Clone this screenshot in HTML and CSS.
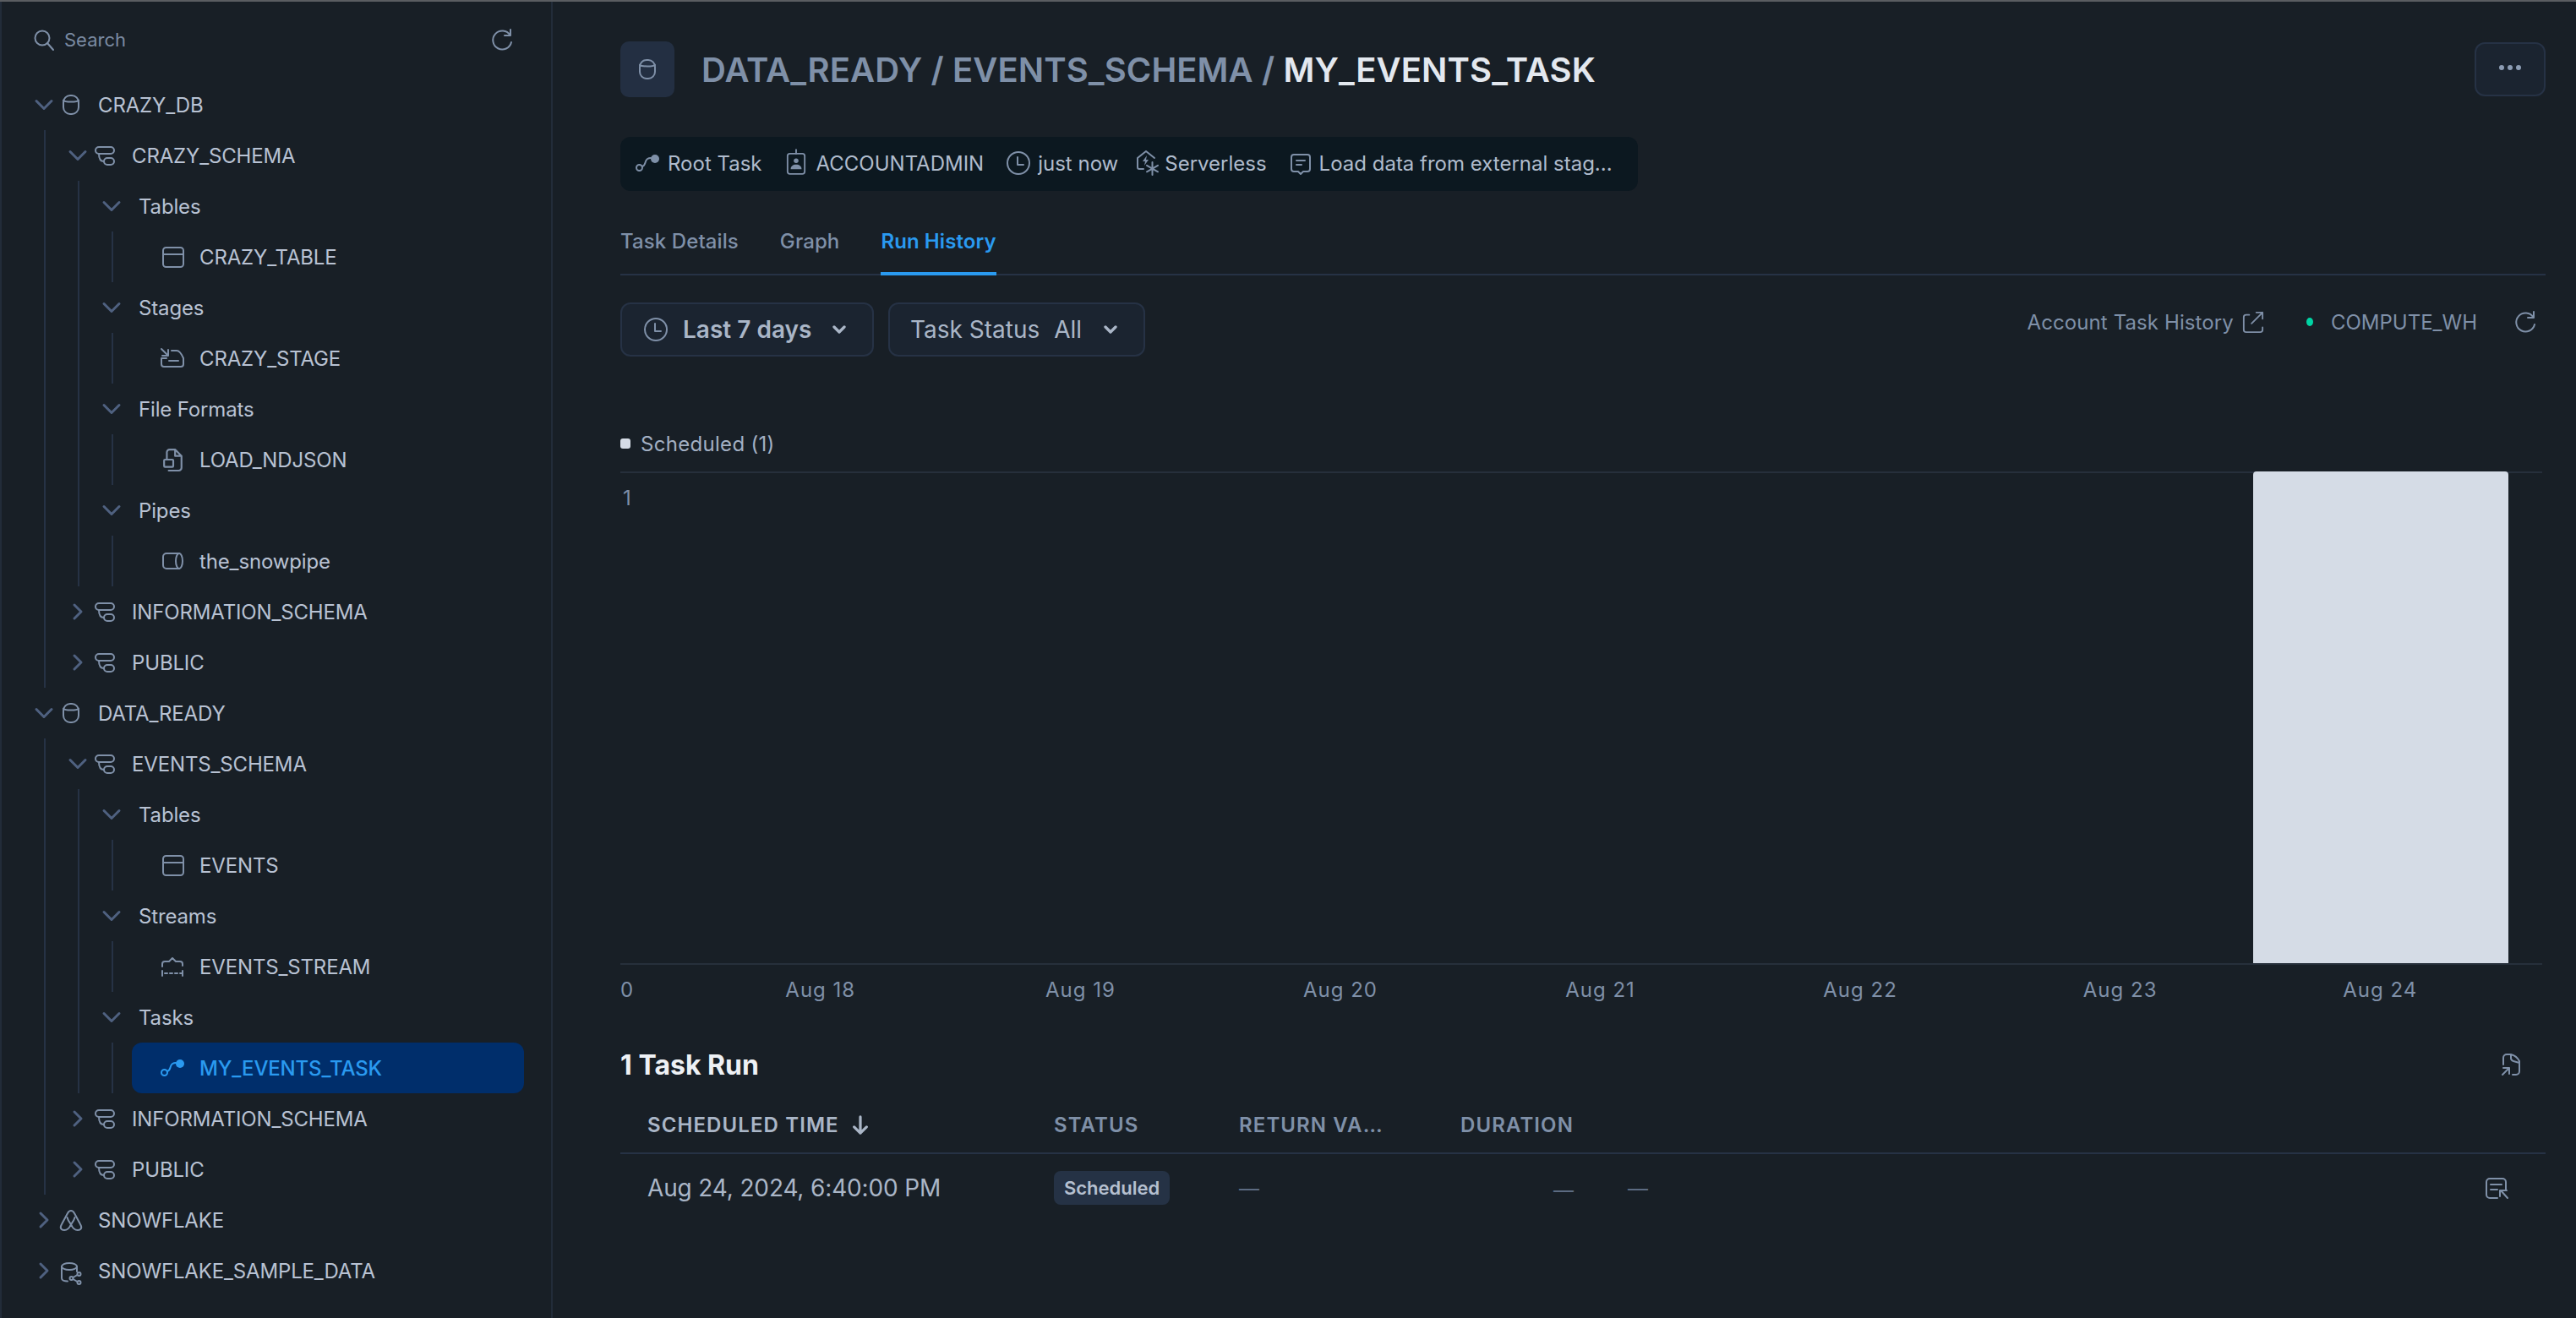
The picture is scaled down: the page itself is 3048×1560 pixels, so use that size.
FILE: index.html
```html
<!DOCTYPE html>
<html lang="en">
<head>
<meta charset="utf-8">
<title>MY_EVENTS_TASK</title>
<link rel="stylesheet" href="styles.css">
</head>
<body>
<svg class="sprite" xmlns="http://www.w3.org/2000/svg">
  <symbol id="i-down" viewBox="0 0 24 24"><path d="M3 7.500l9 9 9-9"/></symbol>
  <symbol id="i-right" viewBox="0 0 24 24"><path d="M8 4l8 8-8 8"/></symbol>
  <symbol id="i-db" viewBox="0 0 24 24"><rect x="3" y="1" width="18" height="22" rx="8"/><path d="M3 7c2 2 16 2 18 0"/></symbol>
  <symbol id="i-schema" viewBox="0 0 24 24"><rect x="1" y="2" width="22" height="8" rx="4"/><rect x="11" y="15" width="12" height="8" rx="4"/><path d="M5 10c0 6 2 9 6 9"/></symbol>
  <symbol id="i-table" viewBox="0 0 26 26"><rect x="1" y="2" width="24" height="23" rx="3.5"/><path d="M1 10h24"/></symbol>
  <symbol id="i-stage" viewBox="2 0 26 26"><path d="M1 2l8 8M9 3v7H2"/><path d="M13 4h6c3 0 5 2 8 9v7a3 3 0 0 1-3 3H4a3 3 0 0 1-3-3v-7h6M10 16h11"/></symbol>
  <symbol id="i-file" viewBox="0 0 24 24"><path d="M5 12V4a3 3 0 0 1 3-3h6l7 7v13a3 3 0 0 1-3 3H7M14 1v7h7"/><rect x="2" y="12" width="10" height="8" rx="1"/></symbol>
  <symbol id="i-pipe" viewBox="0 0 26 24"><path d="M20 3H5a4 4 0 0 0-4 4v10a4 4 0 0 0 4 4h15"/><ellipse cx="20" cy="12" rx="4" ry="9"/></symbol>
  <symbol id="i-stream" viewBox="2 0 26 26"><path d="M2 10c0-2 1-3 3-3h5l4-4 4 4h5c2 0 3 1 3 3v2M2 10v3M2 18v6M26 18v6M5 21h3M11 21h3M17 21h3M23 21h3"/></symbol>
  <symbol id="i-task" viewBox="0 0 28 20"><circle cx="4.500" cy="15.500" r="3.500"/><circle class="solid" cx="23" cy="5" r="5"/><path d="M8 14c3-1 3-3 4-6s3-4 6-4"/></symbol>
  <symbol id="i-share" viewBox="0 0 24 26"><ellipse cx="10" cy="5" rx="9" ry="4"/><path d="M1 5v14c0 2 3 3.500 7 3.500M19 5v6"/><circle cx="21.500" cy="14" r="2"/><circle cx="12.500" cy="19" r="2"/><circle cx="21.500" cy="24" r="2"/><path d="M14.500 18l5-3M14.500 20l5 3"/></symbol>
  <symbol id="i-snow" viewBox="0 0 26 25"><path d="M13 1c-2 0-3 1-4 3L2 17c-3 5 0 7 3 7 3 0 6-2 8-7 2 5 5 7 8 7 3 0 6-2 3-7L17 4c-1-2-2-3-4-3z"/><path d="M8.500 9c1 4 3 6 4.500 8 1.500-2 3.500-4 4.500-8"/></symbol>
  <symbol id="i-search" viewBox="0 0 24 24"><circle cx="10" cy="10" r="8.500"/><path d="M16 16l7 8"/></symbol>
  <symbol id="i-refresh" viewBox="0 0 24 24"><path d="M21.500 6.500A11 11 0 1 0 23 15M22 0v7h-7"/></symbol>
  <symbol id="i-badge" viewBox="0 0 26 32"><rect x="2" y="5" width="22" height="26" rx="3"/><path d="M13 0v5"/><circle class="solid" cx="13" cy="14" r="3"/><path class="solid" d="M6 25c0-4 3-6 7-6s7 2 7 6z"/></symbol>
  <symbol id="i-clock" viewBox="0 0 28 28"><circle cx="14" cy="14" r="13"/><path d="M13 7v9h7"/></symbol>
  <symbol id="i-serverless" viewBox="0 0 27 30"><path d="M8 22H3a2 2 0 0 1-2-2V9l10-8 10 8"/><path class="solid" d="M12 6l-5 7h3l-1 5 5-7h-3z"/><path d="M18.500 14v15M12 17.800l13 7.500M25 17.800l-13 7.500"/></symbol>
  <symbol id="i-comment" viewBox="0 0 24 25"><path d="M4 1h16a3 3 0 0 1 3 3v14a3 3 0 0 1-3 3h-5l-3 3-3-3H4a3 3 0 0 1-3-3V4a3 3 0 0 1 3-3zM7 8h10M7 13h6"/></symbol>
  <symbol id="i-external" viewBox="0 0 28 28"><path d="M9 5H5a3 3 0 0 0-3 3v16a3 3 0 0 0 3 3h18a3 3 0 0 0 3-3v-3M12 16L26 2M18 2h8v8"/></symbol>
  <symbol id="i-export" viewBox="0 0 22 26"><path d="M2 13V5a4 4 0 0 1 4-4h5c4 1 8 4 10 8v12a4 4 0 0 1-4 4h-4M11 1v4a4 4 0 0 0 3 4l7 2M1 25l8-8M2 17h7v7"/></symbol>
  <symbol id="i-open" viewBox="0 0 27 25"><path d="M14 24H5a4 4 0 0 1-4-4V5a4 4 0 0 1 4-4h15a4 4 0 0 1 4 4v10M6 8h13M6 14h8M18 15l8 9M17 22v-7h8"/></symbol>
  <symbol id="i-sort" viewBox="0 0 24 24"><path d="M12 1v21M4 14l8 8 8-8"/></symbol>
</svg>

<div class="topbar"></div>
<div class="app">
  <aside class="sidebar">
    <div class="search">
      <svg class="ico s24"><use href="#i-search"/></svg>
      <span class="search-text">Search</span>
      <svg class="ico s24 push"><use href="#i-refresh"/></svg>
    </div>
    <div class="tree">
      <div class="row l0"><svg class="chev"><use href="#i-down"/></svg><svg class="ico s24"><use href="#i-db"/></svg><span>CRAZY_DB</span></div>
      <div class="kids k0">
        <div class="row l1"><svg class="chev"><use href="#i-down"/></svg><svg class="ico s24"><use href="#i-schema"/></svg><span>CRAZY_SCHEMA</span></div>
        <div class="kids k1">
          <div class="row l2"><svg class="chev"><use href="#i-down"/></svg><span>Tables</span></div>
          <div class="kids k2"><div class="row l3"><svg class="ico s26"><use href="#i-table"/></svg><span>CRAZY_TABLE</span></div></div>
          <div class="row l2"><svg class="chev"><use href="#i-down"/></svg><span>Stages</span></div>
          <div class="kids k2"><div class="row l3"><svg class="ico s26"><use href="#i-stage"/></svg><span>CRAZY_STAGE</span></div></div>
          <div class="row l2"><svg class="chev"><use href="#i-down"/></svg><span>File Formats</span></div>
          <div class="kids k2"><div class="row l3"><svg class="ico s26"><use href="#i-file"/></svg><span>LOAD_NDJSON</span></div></div>
          <div class="row l2"><svg class="chev"><use href="#i-down"/></svg><span>Pipes</span></div>
          <div class="kids k2"><div class="row l3"><svg class="ico s26"><use href="#i-pipe"/></svg><span>the_snowpipe</span></div></div>
        </div>
        <div class="row l1"><svg class="chev"><use href="#i-right"/></svg><svg class="ico s24"><use href="#i-schema"/></svg><span>INFORMATION_SCHEMA</span></div>
        <div class="row l1"><svg class="chev"><use href="#i-right"/></svg><svg class="ico s24"><use href="#i-schema"/></svg><span>PUBLIC</span></div>
      </div>
      <div class="row l0"><svg class="chev"><use href="#i-down"/></svg><svg class="ico s24"><use href="#i-db"/></svg><span>DATA_READY</span></div>
      <div class="kids k0">
        <div class="row l1"><svg class="chev"><use href="#i-down"/></svg><svg class="ico s24"><use href="#i-schema"/></svg><span>EVENTS_SCHEMA</span></div>
        <div class="kids k1">
          <div class="row l2"><svg class="chev"><use href="#i-down"/></svg><span>Tables</span></div>
          <div class="kids k2"><div class="row l3"><svg class="ico s26"><use href="#i-table"/></svg><span>EVENTS</span></div></div>
          <div class="row l2"><svg class="chev"><use href="#i-down"/></svg><span>Streams</span></div>
          <div class="kids k2"><div class="row l3"><svg class="ico s26"><use href="#i-stream"/></svg><span>EVENTS_STREAM</span></div></div>
          <div class="row l2"><svg class="chev"><use href="#i-down"/></svg><span>Tasks</span></div>
          <div class="kids k2"><div class="row l3 active"><svg class="ico s-task-row"><use href="#i-task"/></svg><span>MY_EVENTS_TASK</span></div></div>
        </div>
        <div class="row l1"><svg class="chev"><use href="#i-right"/></svg><svg class="ico s24"><use href="#i-schema"/></svg><span>INFORMATION_SCHEMA</span></div>
        <div class="row l1"><svg class="chev"><use href="#i-right"/></svg><svg class="ico s24"><use href="#i-schema"/></svg><span>PUBLIC</span></div>
      </div>
      <div class="row l0"><svg class="chev"><use href="#i-right"/></svg><svg class="ico snow"><use href="#i-snow"/></svg><span>SNOWFLAKE</span></div>
      <div class="row l0"><svg class="chev"><use href="#i-right"/></svg><svg class="ico share"><use href="#i-share"/></svg><span>SNOWFLAKE_SAMPLE_DATA</span></div>
    </div>
  </aside>

  <main class="main">
    <header class="header">
      <div class="obj-icon"><svg class="ico s24"><use href="#i-db"/></svg></div>
      <h1 class="title"><span class="crumb">DATA_READY / EVENTS_SCHEMA / </span>MY_EVENTS_TASK</h1>
      <button class="more"><i></i><i></i><i></i></button>
    </header>

    <div class="meta">
      <div class="meta-item"><svg class="ico s-task"><use href="#i-task"/></svg><span>Root Task</span></div>
      <div class="meta-item"><svg class="ico s-badge"><use href="#i-badge"/></svg><span>ACCOUNTADMIN</span></div>
      <div class="meta-item tight1"><svg class="ico s-clock"><use href="#i-clock"/></svg><span>just now</span></div>
      <div class="meta-item tight2"><svg class="ico s-srv"><use href="#i-serverless"/></svg><span>Serverless</span></div>
      <div class="meta-item"><svg class="ico s-comment"><use href="#i-comment"/></svg><span>Load data from external stag...</span></div>
    </div>

    <nav class="tabs">
      <a class="tab">Task Details</a>
      <a class="tab">Graph</a>
      <a class="tab current">Run History</a>
    </nav>

    <div class="toolbar">
      <button class="filter first"><svg class="ico s28"><use href="#i-clock"/></svg><b>Last 7 days</b><svg class="caret"><use href="#i-down"/></svg></button>
      <button class="filter second"><span>Task Status</span><span>All</span><svg class="caret"><use href="#i-down"/></svg></button>
      <div class="tool-right">
        <span class="hist">Account Task History</span><svg class="ico s-ext"><use href="#i-external"/></svg>
        <i class="dot"></i><span class="wh">COMPUTE_WH</span>
        <svg class="ico s24 tool-refresh"><use href="#i-refresh"/></svg>
      </div>
    </div>

    <section class="chart">
      <div class="legend"><i class="swatch"></i><span>Scheduled (1)</span></div>
      <div class="plot">
        <div class="y-axis">1</div>
        <div class="cols"><div></div><div></div><div></div><div></div><div></div><div></div><div class="bar"></div></div>
      </div>
      <div class="x-axis">
        <div class="x-zero">0</div>
        <div class="cols labels"><div>Aug 18</div><div>Aug 19</div><div>Aug 20</div><div>Aug 21</div><div>Aug 22</div><div>Aug 23</div><div>Aug 24</div></div>
      </div>
    </section>

    <div class="runs-head">
      <h2>1 Task Run</h2>
      <svg class="ico s-export"><use href="#i-export"/></svg>
    </div>
    <div class="grid thead">
      <div class="th sorted">SCHEDULED TIME<svg class="ico sort"><use href="#i-sort"/></svg></div>
      <div class="th">STATUS</div>
      <div class="th">RETURN VA…</div>
      <div class="th">DURATION</div>
    </div>
    <div class="grid tbody">
      <div class="cell-time">Aug 24, 2024, 6:40:00 PM</div>
      <div><span class="badge">Scheduled</span></div>
      <div class="nil">—</div>
      <div class="nil end">—</div>
      <div></div>
      <div class="nil">—</div>
      <div class="open"><svg class="ico s-open"><use href="#i-open"/></svg></div>
    </div>
  </main>
</div>
</body>
</html>
```

FILE: styles.css
```css
* { box-sizing: border-box; }
html, body { margin: 0; height: 100%; }
body {
  background: #181f26;
  color: #b8c2d3;
  font-family: Inter, "Liberation Sans", sans-serif;
  font-size: 24px;
  overflow: hidden;
}
.sprite { width: 0; height: 0; position: absolute; }
symbol { overflow: visible; }
.topbar { height: 2px; background: #5a5d61; }
.app { display: flex; height: 1558px; border-left: 2px solid #222c39; }

.ico { fill: none; stroke: #7f90a8; color: #7f90a8; stroke-width: 2; stroke-linecap: round; stroke-linejoin: round; flex: none; overflow: visible; }
.solid { fill: currentColor; stroke: none; }
.s24 { width: 24px; height: 24px; }
.s26 { width: 26px; height: 26px; }
.s28 { width: 28px; height: 28px; }

/* sidebar */
.sidebar { width: 652px; flex: none; border-right: 2px solid #222c39; }
.search { height: 92px; display: flex; align-items: center; padding: 0 46px 2px 38px; }
.search-text { margin-left: 12px; font-size: 22px; color: #7a8aa1; }
.push { margin-left: auto; }

.row { height: 60px; display: flex; align-items: center; white-space: nowrap; letter-spacing: -.15px; }
.row span { color: #b8c2d3; }
.chev { width: 24px; height: 24px; flex: none; fill: none; stroke: #4f6180; stroke-width: 3; stroke-linecap: round; stroke-linejoin: round; margin-right: 8px; }
.row.l0 { padding-left: 38px; }
.l0 .ico { margin-right: 20px; }
.kids { border-left: 2px solid #263245; }
.k0 { margin-left: 50px; }
.k1 { margin-left: 38px; }
.k2 { margin-left: 38px; }
.row.l1 { padding-left: 26px; }
.l1 .ico { margin-right: 20px; }
.row.l2 { padding-left: 26px; }
.l2 .chev { margin-right: 20px; }
.row.l3 { margin-left: 22px; width: 464px; padding-left: 36px; border-radius: 12px; }
.l3 .ico { margin-right: 18px; }
.active { background: #002e6b; }
.row.active span { color: #2a9af0; font-weight: 500; }
.active .ico { stroke: #2a9af0; color: #2a9af0; }
.l3 .s-task-row { width: 28px; height: 20px; margin-left: -2px; }
.l0 .snow { width: 26px; height: 25px; margin-left: -1px; margin-right: 19px; }
.l0 .share { width: 24px; height: 26px; margin-top: 6px; }

/* main */
.main { flex: 1; min-width: 0; padding: 47px 36px 0 80px; }
.header { display: flex; align-items: center; height: 66px; }
.obj-icon { width: 64px; height: 66px; border-radius: 10px; background: #232f42; display: flex; align-items: center; justify-content: center; }
.title { margin: 0 0 0 32px; font-size: 40px; font-weight: 600; color: #e3e8ef; letter-spacing: .1px; white-space: nowrap; }
.crumb { color: #7f90a8; }
.more { margin-left: auto; width: 84px; height: 64px; background: #1b2430; border: 2px solid #263245; border-radius: 12px; display: flex; align-items: center; justify-content: center; gap: 4px; padding: 0 0 4px; }
.more i { width: 6px; height: 6px; border-radius: 50%; background: #8c9cb3; }

.meta { margin-top: 47px; width: 1204px; height: 64px; background: #0c1820; border-radius: 12px; display: flex; align-items: center; padding: 0 0 2px 18px; gap: 28px; color: #b0bccd; white-space: nowrap; }
.meta-item { display: flex; align-items: center; }
.tight1 { margin-left: -1px; }
.tight2 { margin-left: -6px; }
.s-task { width: 28px; height: 20px; margin-right: 10px; }
.s-badge { width: 24px; height: 30px; margin-right: 12px; margin-top: -2px; }
.s-clock { width: 28px; height: 28px; margin-right: 9px; }
.s-srv { width: 27px; height: 30px; margin-right: 6px; }
.s-comment { width: 24px; height: 25px; margin-right: 10px; margin-top: 2px; }

.tabs { margin-top: 26px; height: 74px; border-bottom: 2px solid #263245; display: flex; gap: 49px; }
.tab { height: 74px; padding-top: 17px; line-height: 34px; border-bottom: 4px solid transparent; font-weight: 500; color: #7f90a8; letter-spacing: .1px; }
.tab.current { color: #2a9af0; border-bottom-color: #2a9af0; font-weight: 600; }

.toolbar { margin-top: 32px; display: flex; gap: 17px; }
.filter { height: 64px; display: flex; align-items: center; background: #1b2430; border: 2px solid #263245; border-radius: 12px; font: inherit; font-size: 28px; color: #aab6c7; padding: 0; white-space: nowrap; }
.filter b { font-weight: 600; }
.first { width: 300px; padding-left: 26px; }
.first b { margin-left: 18px; }
.second { width: 304px; padding-left: 24px; gap: 17px; }
.caret { width: 16px; height: 16px; fill: none; stroke: #aab6c7; stroke-width: 5; stroke-linecap: round; stroke-linejoin: round; flex: none; margin-left: 25px; }
.second .caret { margin-left: 9px; }
.tool-right { margin-left: auto; height: 46px; display: flex; align-items: center; color: #7f90a8; }
.hist { letter-spacing: .1px; }
.s-ext { width: 26px; height: 26px; margin-left: 10px; }
.dot { width: 8px; height: 10px; border-radius: 50%; background: #00d4a4; margin-left: 50px; }
.wh { margin-left: 21px; }
.tool-refresh { margin-left: 45px; margin-right: 12px; }

/* chart */
.chart { margin-top: 87px; margin-right: 4px; }
.legend { height: 32px; display: flex; align-items: center; color: #a3b0c3; letter-spacing: .3px; }
.swatch { width: 12px; height: 12px; border-radius: 3px; background: #d5dce6; margin-right: 12px; }
.plot { margin-top: 17px; height: 584px; border-top: 2px solid #262f3b; border-bottom: 2px solid #262f3b; display: flex; }
.y-axis { width: 82px; flex: none; padding: 14px 0 0 3px; line-height: 32px; color: #7f90a8; }
.cols { width: 2153px; flex: none; display: grid; grid-template-columns: repeat(7, 1fr); }
.bar { background: #d5dce6; border-radius: 4px 4px 0 0; margin: -2px 1px 0 5px; }
.x-axis { margin-top: 14px; display: flex; line-height: 32px; color: #7f90a8; }
.x-zero { width: 83px; flex: none; }
.labels > div { text-align: center; letter-spacing: 1px; }

/* table */
.runs-head { margin-top: 50px; height: 44px; display: flex; align-items: center; justify-content: space-between; padding-right: 30px; }
.runs-head h2 { margin: 0; font-size: 32px; font-weight: 700; color: #eef1f5; }
.s-export { width: 22px; height: 26px; }
.grid { display: grid; grid-template-columns: 481px 219px 262px 134px 64px 1fr 72px; padding-left: 32px; }
.thead { height: 84px; padding-top: 34px; padding-bottom: 16px; border-bottom: 2px solid #263245; }
.th { line-height: 32px; font-weight: 600; letter-spacing: 1.1px; color: #7f90a8; white-space: nowrap; display: flex; align-items: center; }
.th.sorted { color: #aab6c7; }
.sort { width: 22px; height: 24px; margin-left: 14px; stroke: #aab6c7; stroke-width: 3.5; }
.tbody { height: 80px; align-items: center; }
.cell-time { font-size: 28px; color: #aab6c7; white-space: nowrap; letter-spacing: -.15px; }
.badge { display: inline-flex; align-items: center; height: 40px; padding: 0 12px; background: #253245; border-radius: 8px; font-size: 22px; font-weight: 600; color: #b5c0d0; }
.nil { color: #5c6b82; }
.nil.end { text-align: right; padding-top: 4px; }
.open { display: flex; justify-content: flex-end; padding-right: 44px; }
.s-open { width: 27px; height: 25px; }
```
